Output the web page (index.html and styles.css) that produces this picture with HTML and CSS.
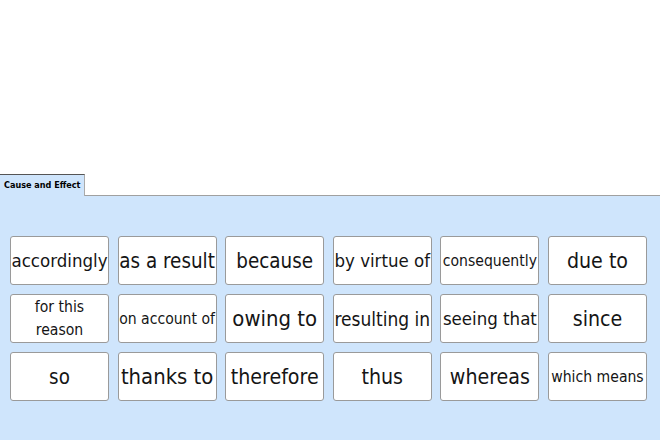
FILE: index.html
```html
<!DOCTYPE html>
<html lang="en">
<head>
    <meta charset="UTF-8">
    <title>Cause and Effect</title>
    <link rel="stylesheet" href="styles.css">
</head>
<body>
    <div class="blank"></div>

    <!-- Tab strip -->
    <div class="tabs">
        <div class="tab">Cause and Effect</div>
        <div class="tab-rest"></div>
    </div>

    <div class="panel">
        <div class="grid">
            <div class="card f18">accordingly</div>
            <div class="card f20">as a result</div>
            <div class="card f20">because</div>
            <div class="card f18">by virtue of</div>
            <div class="card f15">consequently</div>
            <div class="card f21">due to</div>

            <div class="card f15 two">for this<br>reason</div>
            <div class="card f15">on account of</div>
            <div class="card f22">owing to</div>
            <div class="card f19">resulting in</div>
            <div class="card f18">seeing that</div>
            <div class="card f21">since</div>

            <div class="card f20">so</div>
            <div class="card f22">thanks to</div>
            <div class="card f21">therefore</div>
            <div class="card f21">thus</div>
            <div class="card f21">whereas</div>
            <div class="card f15">which means</div>
        </div>
    </div>
</body>
</html>
```

FILE: styles.css
```css
/* General Styles */
body {
    margin: 0;
    padding: 0;
    width: 660px;
    height: 440px;
    overflow: hidden;
    background: #fff;
    display: flex;
    flex-direction: column;
}

.blank {
    height: 174px;
}

/* Tabs */
.tabs {
    display: flex;
    height: 22px;
}

.tab {
    background: #cfe5fc;
    border-top: 1px solid #555;
    border-right: 1px solid #aaa;
    padding: 0 4px;
    font-family: "DejaVu Sans Condensed", "DejaVu Sans", sans-serif;
    font-size: 9px;
    font-weight: bold;
    line-height: 21px;
    color: #000;
}

.tab-rest {
    flex: 1;
    border-bottom: 1px solid #a0a0a0;
}

/* Panel */
.panel {
    flex: 1;
    background: #cfe5fc;
    padding: 40px 0 0 10px;
}

.grid {
    display: grid;
    grid-template-columns: repeat(6, 99px);
    grid-auto-rows: 49px;
    column-gap: 8.6px;
    row-gap: 9px;
}

.card {
    box-sizing: border-box;
    background: #fff;
    border: 1px solid #9a9a9a;
    border-radius: 3px;
    display: flex;
    align-items: center;
    justify-content: center;
    text-align: center;
    font-family: "DejaVu Sans Condensed", "DejaVu Sans", sans-serif;
    color: #151515;
    white-space: nowrap;
}

/* font sizes */
.f15 { font-size: 15.6px; }
.f18 { font-size: 18.5px; }
.f19 { font-size: 19px; }
.f20 { font-size: 20.4px; }
.f21 { font-size: 21.2px; }
.f22 { font-size: 21.9px; }

.two {
    line-height: 23px;
}
```
